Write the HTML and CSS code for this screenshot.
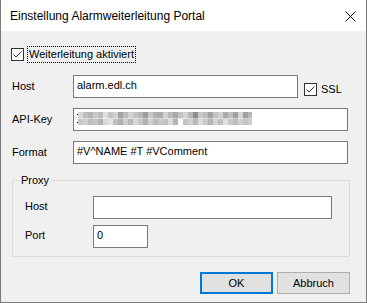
FILE: index.html
```html
<!DOCTYPE html>
<html lang="de">
<head>
  <meta charset="UTF-8">
  <title>Einstellung Alarmweiterleitung Portal</title>
  <link rel="stylesheet" href="styles.css">
</head>
<body>

  <div class="dialog">
    <div class="titlebar">
      <span class="title">Einstellung Alarmweiterleitung Portal</span>
      <svg class="close" width="11" height="11" viewBox="0 0 11 11">
        <path d="M0.5 0.5 L10.5 10.5 M10.5 0.5 L0.5 10.5" stroke="#000" stroke-width="1" fill="none"/>
      </svg>
    </div>

    <div class="content">
      <div class="check main-check">
        <span class="box">
          <svg width="11" height="11" viewBox="0 0 11 11">
            <path d="M1.5 5.5 L4 8 L9.5 2.5" stroke="#333" stroke-width="1" fill="none"/>
          </svg>
        </span>
        <span class="check-label focused">Weiterleitung aktiviert</span>
      </div>

      <div class="field first">
        <label>Host</label>
        <div class="input host">alarm.edl.ch</div>
        <div class="check ssl">
          <span class="box">
            <svg width="11" height="11" viewBox="0 0 11 11">
              <path d="M1.5 5.5 L4 8 L9.5 2.5" stroke="#333" stroke-width="1" fill="none"/>
            </svg>
          </span>
          <span class="check-label">SSL</span>
        </div>
      </div>

      <div class="field">
        <label>API-Key</label>
        <div class="input wide"><span class="dots"></span><span class="blurred"></span></div>
      </div>

      <div class="field">
        <label>Format</label>
        <div class="input wide">#V^NAME #T #VComment</div>
      </div>

      <fieldset class="proxy">
        <legend>Proxy</legend>
        <div class="proxy-row first-proxy">
          <label>Host</label>
          <div class="input proxy-host"></div>
        </div>
        <div class="proxy-row">
          <label>Port</label>
          <div class="input port">0</div>
        </div>
      </fieldset>

      <div class="buttons">
        <button class="btn default">OK</button>
        <button class="btn">Abbruch</button>
      </div>
    </div>
  </div>

</body>
</html>
```

FILE: styles.css
```css
body {
  margin: 0;
  font-family: "Liberation Sans", Arial, sans-serif;
  font-size: 11px;
  color: #000;
}

.dialog {
  width: 367px;
  height: 303px;
  box-sizing: border-box;
  border: 1px solid #7a7a7a;
  border-top: none;
  background-color: #f0f0f0;
}

.titlebar {
  height: 31px;
  background-color: #fff;
  display: flex;
  align-items: center;
  justify-content: space-between;
  padding-left: 9px;
  padding-right: 10px;
}

.title {
  font-size: 12px;
}

.close {
  margin-top: 1px;
}

.content {
  padding: 15px 16px 0 11px;
}

/* checkboxes */
.check {
  display: flex;
  align-items: center;
}

.main-check {
  height: 17px;
  margin-left: -1px;
}

.box {
  width: 13px;
  height: 13px;
  box-sizing: border-box;
  border: 1px solid #333;
  background-color: #fff;
  display: flex;
}

.check-label {
  margin-left: 3px;
  padding: 0 1px;
  line-height: 15px;
  border: 1px dotted transparent;
}

.check-label.focused {
  border-color: #000;
}

.ssl {
  margin-left: 6px;
  margin-top: 5px;
}

.ssl .check-label {
  margin-left: 2px;
}

/* text fields */
.field,
.proxy-row {
  display: flex;
  align-items: center;
}

.field {
  margin-top: 10px;
}

.field.first {
  margin-top: 12px;
}

.field label {
  width: 61px;
  margin-top: -1px;
}

.input {
  height: 23px;
  box-sizing: border-box;
  border: 1px solid #7a7a7a;
  background-color: #fff;
  padding: 2px 0 0 3px;
  line-height: 15px;
  display: flex;
  align-items: flex-start;
}

.host {
  width: 225px;
}

.wide {
  width: 275px;
}

.dots {
  width: 1px;
  height: 13px;
  margin-top: 1px;
  background:
    linear-gradient(#000, #000) 0 2px / 1px 1px no-repeat,
    linear-gradient(#000, #000) 0 10px / 1px 1px no-repeat;
}

.blurred {
  width: 174px;
  height: 13px;
  margin-top: 1px;
  background:
    linear-gradient(90deg,
      #d8d8d8 0 5px, #c0c0c0 5px 10px, #b4b4b4 10px 15px, #c8c8c8 15px 20px, #bcbcbc 20px 25px,
      #e0e0e0 25px 30px, #c4c4c4 30px 35px, #d0d0d0 35px 40px, #a4a4a4 40px 45px, #bcbcbc 45px 50px,
      #d0d0d0 50px 55px, #c4c4c4 55px 60px, #b8b8b8 60px 65px, #9c9c9c 65px 70px, #c8c8c8 70px 75px,
      #b0b0b0 75px 80px, #acacac 80px 85px, #d0d0d0 85px 90px, #b8b8b8 90px 95px, #a8a8a8 95px 100px,
      #c4c4c4 100px 105px, #d4d4d4 105px 110px, #b8b8b8 110px 115px, #8c8c8c 115px 120px, #c8c8c8 120px 125px,
      #bcbcbc 125px 130px, #a4a4a4 130px 135px, #c4c4c4 135px 140px, #d0d0d0 140px 145px, #acacac 145px 150px,
      #c0c0c0 150px 155px, #a0a0a0 155px 160px, #d4d4d4 160px 165px, #a0a0a0 165px 170px, #b8b8b8 170px 174px)
      top / 100% 50% no-repeat,
    linear-gradient(90deg,
      #c8c8c8 0 5px, #d0d0d0 5px 10px, #bcbcbc 10px 15px, #c4c4c4 15px 20px, #b4b4b4 20px 25px,
      #d8d8d8 25px 30px, #e4e4e4 30px 35px, #c0c0c0 35px 40px, #b0b0b0 40px 45px, #cccccc 45px 50px,
      #b8b8b8 50px 55px, #d8d8d8 55px 60px, #c4c4c4 60px 65px, #b0b0b0 65px 70px, #d0d0d0 70px 75px,
      #bcbcbc 75px 80px, #c8c8c8 80px 85px, #c0c0c0 85px 90px, #dcdcdc 90px 95px, #b4b4b4 95px 100px,
      #ffffff 100px 105px, #c4c4c4 105px 110px, #d0d0d0 110px 115px, #b8b8b8 115px 120px, #dcdcdc 120px 125px,
      #c8c8c8 125px 130px, #b4b4b4 130px 135px, #d4d4d4 135px 140px, #c0c0c0 140px 145px, #e0e0e0 145px 150px,
      #c8c8c8 150px 155px, #bcbcbc 155px 160px, #d0d0d0 160px 165px, #c4c4c4 165px 170px, #cccccc 170px 174px)
      bottom / 100% 50% no-repeat;
}

/* proxy group */
.proxy {
  width: 338px;
  box-sizing: border-box;
  margin: 10px 0 0 0;
  padding: 0 0 8px 6px;
  border: 1px solid #dcdcdc;
  min-width: 0;
}

.proxy legend {
  padding: 0 2px;
  line-height: 13px;
}

.proxy-row {
  margin-left: 6px;
  margin-top: 6px;
}

.proxy-row.first-proxy {
  margin-top: 9px;
}

.proxy-row label {
  width: 68px;
  margin-top: -3px;
}

.proxy-host {
  width: 239px;
}

.port {
  width: 55px;
}

/* buttons */
.buttons {
  display: flex;
  justify-content: flex-end;
  gap: 4px;
  margin-top: 15px;
}

.btn {
  width: 73px;
  height: 22px;
  box-sizing: border-box;
  margin: 0;
  padding: 0;
  font-family: "Liberation Sans", Arial, sans-serif;
  font-size: 11px;
  color: #000;
  background-color: #e1e1e1;
  border: 1px solid #adadad;
}

.btn.default {
  border: 2px solid #0078d7;
}
```
